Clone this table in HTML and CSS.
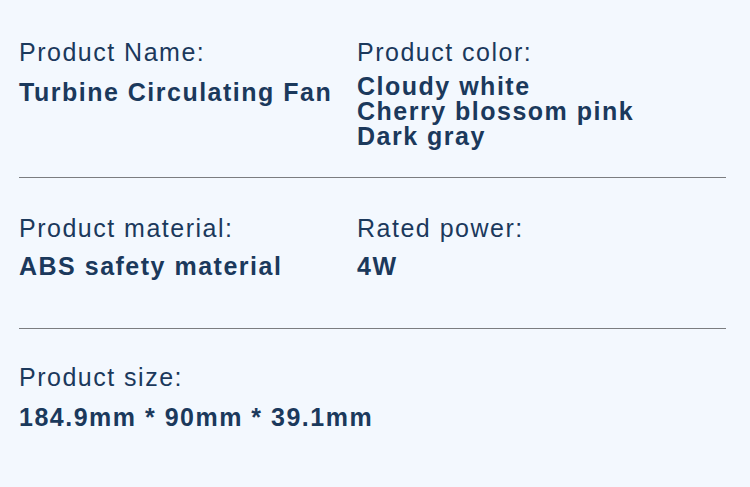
FILE: index.html
```html
<!DOCTYPE html>
<html lang="en">
<head>
<meta charset="utf-8">
<title>Product specs</title>
<link rel="stylesheet" href="styles.css">
</head>
<body>
<div class="specs">
  <div class="row row-1">
    <div class="cell">
      <div class="label">Product Name:</div>
      <div class="value">Turbine Circulating Fan</div>
    </div>
    <div class="cell">
      <div class="label">Product color:</div>
      <div class="value value-list">
        <div class="list-line">Cloudy white</div>
        <div class="list-line">Cherry blossom pink</div>
        <div class="list-line">Dark gray</div>
      </div>
    </div>
  </div>
  <div class="row row-2">
    <div class="cell">
      <div class="label">Product material:</div>
      <div class="value">ABS safety material</div>
    </div>
    <div class="cell">
      <div class="label">Rated power:</div>
      <div class="value">4W</div>
    </div>
  </div>
  <div class="row row-3">
    <div class="cell">
      <div class="label">Product size:</div>
      <div class="value">184.9mm * 90mm * 39.1mm</div>
    </div>
  </div>
</div>
</body>
</html>
```
FILE: styles.css
```css
html, body {
  margin: 0;
  padding: 0;
  background: #f3f8fe;
}
body {
  width: 750px;
  height: 487px;
  overflow: hidden;
  font-family: "Liberation Sans", Arial, sans-serif;
  color: #1b395c;
}
.specs {
  padding: 0 24px 0 19px;
}
.row {
  display: grid;
  grid-template-columns: 338px 1fr;
  align-items: start;
}
.row-1 {
  padding: 37px 0 28px;
  border-bottom: 1px solid #7b7d80;
}
.row-2 {
  padding: 35px 0 47px;
  border-bottom: 1px solid #7b7d80;
}
.row-3 {
  padding: 33px 0 0;
}
.label {
  font-size: 25px;
  line-height: 30px;
  letter-spacing: 1.5px;
  font-weight: 400;
}
.value {
  font-size: 25px;
  line-height: 30px;
  letter-spacing: 1.5px;
  font-weight: 700;
  margin-top: 10px;
  white-space: nowrap;
}
.row-2 .value {
  margin-top: 8px;
}
.value-list {
  margin-top: 7px;
}
.list-line {
  height: 25px;
  line-height: 25px;
}
```
